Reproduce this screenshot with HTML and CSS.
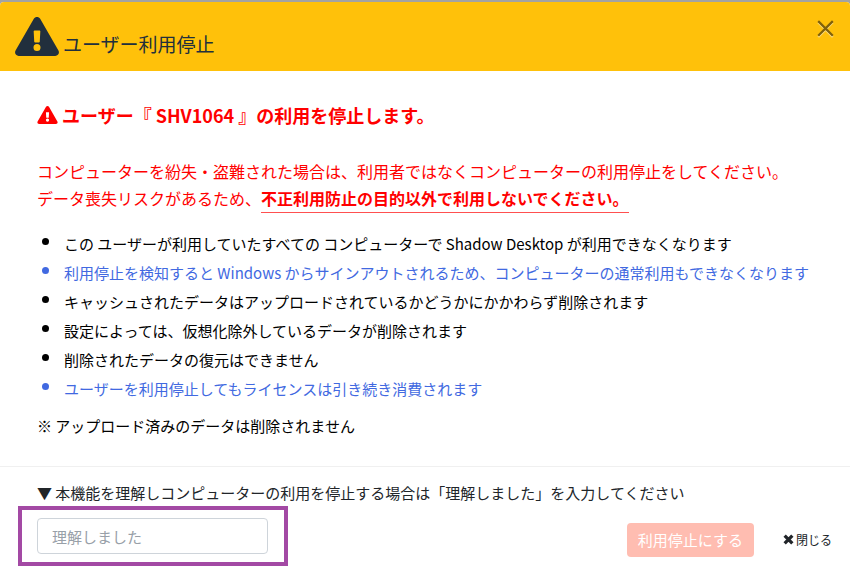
FILE: index.html
```html
<!DOCTYPE html>
<html lang="ja">
<head>
<meta charset="utf-8">
<meta name="viewport" content="width=device-width, initial-scale=1">
<title>ユーザー利用停止</title>
<link rel="stylesheet" href="styles.css">
</head>
<body>
<svg class="symbols" aria-hidden="true">
  <symbol id="warning" viewBox="0 0 576 512">
    <path fill="currentColor" fill-rule="evenodd" d="M569.5 440C588 472 564.800 512 527.900 512H48.100C11.100 512-12 472 6.500 440L246.400 24C264.900-8 311.100-8 329.600 24ZM288 354a46 46 0 1 0 0 92 46 46 0 0 0 0-92ZM244.300 188.700L251.700 324.700C252.100 331 257.300 336 263.700 336H312.300C318.700 336 323.900 331 324.300 324.700L331.700 188.700C332.100 181.800 326.600 176 319.700 176H256.300C249.400 176 243.900 181.800 244.300 188.700Z"/>
  </symbol>
</svg>
<div class="modal" role="dialog" aria-labelledby="title">
  <header class="modal-header">
    <h1 class="title" id="title"><svg class="title-icon" aria-hidden="true"><use href="#warning"/></svg><span>ユーザー利用停止</span></h1>
    <button class="dismiss" type="button" aria-label="閉じる"><svg class="dismiss-icon" viewBox="0 0 15 16" aria-hidden="true"><path class="dismiss-shadow" d="M1 2L14 15M14 2L1 15"/><path class="dismiss-line" d="M1 1L14 14M14 1L1 14"/></svg></button>
  </header>
  <main class="modal-body">
    <h2 class="heading"><svg class="heading-icon" aria-hidden="true"><use href="#warning"/></svg><span>ユーザー『 SHV1064 』の利用を停止します。</span></h2>
    <p class="alert">コンピューターを紛失・盗難された場合は、利用者ではなくコンピューターの利用停止をしてください。<br>データ喪失リスクがあるため、<strong class="alert-strong">不正利用防止の目的以外で利用しないでください。</strong></p>
    <ul class="notes">
      <li>この ユーザーが利用していたすべての コンピューターで Shadow Desktop が利用できなくなります</li>
      <li class="info">利用停止を検知すると Windows からサインアウトされるため、コンピューターの通常利用もできなくなります</li>
      <li>キャッシュされたデータはアップロードされているかどうかにかかわらず削除されます</li>
      <li>設定によっては、仮想化除外しているデータが削除されます</li>
      <li>削除されたデータの復元はできません</li>
      <li class="info">ユーザーを利用停止してもライセンスは引き続き消費されます</li>
    </ul>
    <p class="remark">※ アップロード済みのデータは削除されません</p>
  </main>
  <form class="modal-footer">
    <label class="prompt" for="confirm">▼ 本機能を理解しコンピューターの利用を停止する場合は「理解しました」を入力してください</label>
    <div class="controls">
      <div class="highlight"><input class="confirm" id="confirm" type="text" placeholder="理解しました"></div>
      <div class="actions">
        <button class="submit" type="submit" disabled>利用停止にする</button>
        <button class="cancel" type="button"><svg class="cancel-icon" viewBox="0 0 10 10" aria-hidden="true"><path d="M1.500 1.500L8.500 8.500M8.500 1.500L1.500 8.500"/></svg>閉じる</button>
      </div>
    </div>
  </form>
</div>
</body>
</html>
```

FILE: styles.css
```css
* {
  box-sizing: border-box;
}

body {
  margin: 0;
  padding-top: 2px;
  background: #a3a3a3;
  color: #212529;
  font-family: "Noto Sans CJK JP", sans-serif;
  font-size: 15px;
  line-height: 24px;
}

h1,
h2,
p,
ul {
  margin: 0;
}

button,
input {
  font: inherit;
}

.symbols {
  position: absolute;
  width: 0;
  height: 0;
}

.modal {
  min-height: calc(100vh - 2px);
  border-radius: 4px 4px 0 0;
  background: #fff;
}

.modal-header {
  display: flex;
  align-items: flex-start;
  justify-content: space-between;
  padding: 15px 16px 13px 15px;
  border-radius: 4px 4px 0 0;
  background: #ffc10a;
}

.title {
  display: flex;
  align-items: flex-end;
  gap: 4px;
  color: #212f3d;
  font-size: 19px;
  font-weight: 400;
  line-height: 28px;
}

.title-icon {
  width: 44px;
  height: 39px;
  margin-bottom: 2px;
}

.dismiss {
  display: flex;
  margin-top: 3px;
  padding: 0;
  border: 0;
  background: none;
}

.dismiss-icon {
  width: 17px;
  height: 18px;
  fill: none;
  stroke-width: 2;
}

.dismiss-shadow {
  stroke: #ffe18a;
}

.dismiss-line {
  stroke: #80610a;
}

.modal-body {
  padding: 31px 37px 28px;
  color: #000;
}

.heading {
  display: flex;
  align-items: center;
  gap: 4px;
  margin-bottom: 30px;
  color: #f00;
  font-size: 18px;
  font-weight: 700;
  line-height: 26px;
}

.heading-icon {
  width: 21px;
  height: 18px;
}

.alert {
  margin-bottom: 20px;
  color: #f00;
  font-size: 16px;
  line-height: 27px;
}

.alert-strong {
  padding-bottom: 2px;
  border-bottom: 1px solid #ff5050;
  font-weight: 700;
}

.notes {
  padding: 0;
  list-style: none;
}

.notes li {
  display: flex;
  gap: 15px;
  margin-left: 5px;
  padding-bottom: 5px;
}

.notes li::before {
  flex: none;
  width: 7px;
  height: 7px;
  margin-top: 6px;
  border-radius: 50%;
  background: currentColor;
  content: "";
}

.notes .info {
  color: #4169e1;
}

.remark {
  margin-top: 8px;
}

.modal-footer {
  padding: 14px 18px 8px;
  border-top: 1px solid #f0f0f0;
}

.prompt {
  display: block;
  margin: 0 0 1px 19px;
}

.controls {
  display: flex;
  flex-wrap: wrap;
  align-items: center;
  justify-content: space-between;
}

.highlight {
  padding: 8px 16px 8px 15px;
  border: 4px solid #a349a4;
}

.confirm {
  display: block;
  width: 231px;
  height: 36px;
  padding: 0 14px;
  border: 1px solid #ced4da;
  border-radius: 4px;
  background: #fff;
  color: #495057;
}

.confirm::placeholder {
  color: #98a0a8;
  opacity: 1;
}

.actions {
  display: flex;
  align-items: center;
  gap: 29px;
  padding-top: 7px;
}

.submit {
  padding: 5px 11px;
  border: 0;
  border-radius: 4px;
  background: #ffbdb1;
  color: #fff;
}

.cancel {
  display: flex;
  align-items: center;
  gap: 2px;
  padding: 0;
  border: 0;
  background: none;
  color: #212529;
  font-size: 12px;
}

.cancel-icon {
  width: 11px;
  height: 11px;
  fill: none;
  stroke: currentColor;
  stroke-width: 3;
}
```
